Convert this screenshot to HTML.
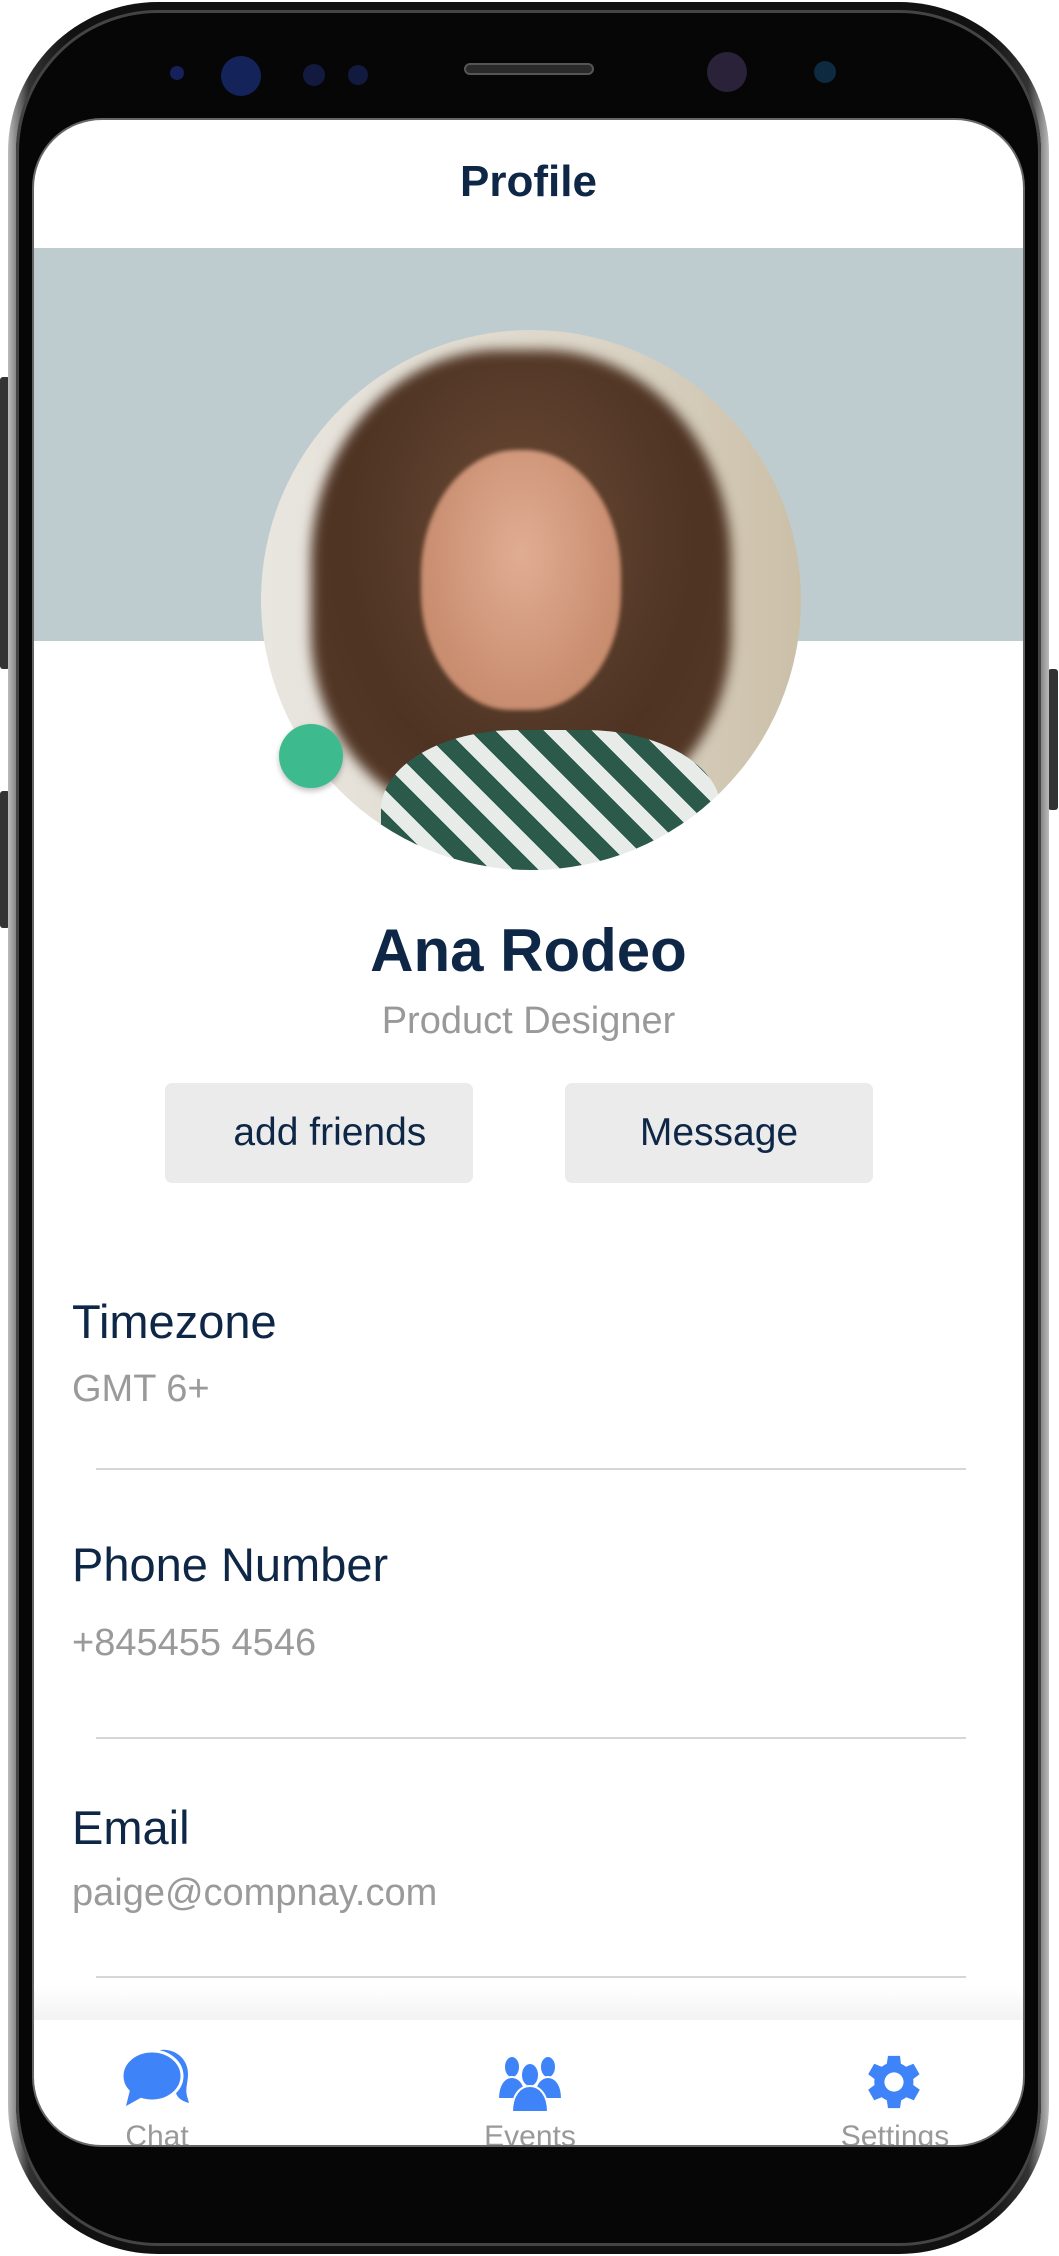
<!DOCTYPE html>
<html><head><meta charset="utf-8"><style>
*{margin:0;padding:0;box-sizing:border-box}
body{width:1059px;height:2256px;background:#fff;position:relative;overflow:hidden;font-family:"Liberation Sans","DejaVu Sans",sans-serif}
.abs{position:absolute}
.outer{left:8px;top:2px;width:1041px;height:2252px;border-radius:150px;background:linear-gradient(90deg,#bbb,#333 2%,#111 6%,#111 94%,#333 98%,#bbb);}
.body{left:16px;top:10px;width:1025px;height:2236px;border-radius:142px;background:#060606;box-shadow:inset 0 0 0 3px #444}
.screen{left:32px;top:118px;width:993px;height:2029px;border-radius:70px;background:#fff;overflow:hidden;border:2px solid #666}
.lbl{position:absolute;left:38px;color:#0f2747;font-size:47px}
.val{position:absolute;left:38px;color:#9a9a9a;font-size:38px}
.hr{position:absolute;left:62px;width:870px;height:2px;background:#d6d6d6}
.btn{position:absolute;top:963px;width:308px;height:100px;background:#ebebeb;border-radius:7px;color:#0f2747;font-size:39px;line-height:100px;text-align:center}
.nl{position:absolute;top:2000px;color:#999;font-size:30px;width:200px;text-align:center}
</style></head><body>
<div class="abs" style="left:0;top:377px;width:10px;height:292px;background:#333;border-radius:3px"></div>
<div class="abs" style="left:0;top:791px;width:10px;height:137px;background:#333;border-radius:3px"></div>
<div class="abs" style="left:1048px;top:669px;width:10px;height:141px;background:#333;border-radius:3px"></div>
<div class="abs outer"></div>
<div class="abs body"></div>
<div class="abs" style="left:170px;top:66px;width:14px;height:14px;border-radius:50%;background:#16205a"></div>
<div class="abs" style="left:221px;top:56px;width:40px;height:40px;border-radius:50%;background:#14235a"></div>
<div class="abs" style="left:303px;top:64px;width:22px;height:22px;border-radius:50%;background:#131a40"></div>
<div class="abs" style="left:348px;top:65px;width:20px;height:20px;border-radius:50%;background:#131a40"></div>
<div class="abs" style="left:464px;top:63px;width:130px;height:12px;border-radius:6px;background:#2a2a2a;border:2px solid #555"></div>
<div class="abs" style="left:707px;top:52px;width:40px;height:40px;border-radius:50%;background:#2a2238"></div>
<div class="abs" style="left:814px;top:61px;width:22px;height:22px;border-radius:50%;background:#0d2a40"></div>
<div class="abs screen">
  <div class="abs" style="left:0;top:0;width:100%;height:128px;text-align:center;line-height:124px;font-size:44px;font-weight:bold;color:#0f2747">Profile</div>
  <div class="abs" style="left:0;top:128px;width:100%;height:393px;background:#bfcccf"></div>
  <div class="abs" style="left:227px;top:210px;width:540px;height:540px;border-radius:50%;overflow:hidden;background:linear-gradient(90deg,#e9e6e0,#dcd6c8 60%,#cbbfa8)">
    <div class="abs" style="left:50px;top:20px;width:420px;height:470px;border-radius:45% 45% 40% 40%;background:radial-gradient(ellipse at 50% 40%,#6a4a35,#4e3323 60%,#5a3d2a);filter:blur(6px)"></div>
    <div class="abs" style="left:160px;top:120px;width:200px;height:260px;border-radius:48% 48% 45% 45%;background:radial-gradient(ellipse at 50% 40%,#e0ad92,#c98d70 70%);filter:blur(2px)"></div>
    <div class="abs" style="left:120px;top:400px;width:340px;height:200px;border-radius:40% 40% 0 0;background:repeating-linear-gradient(45deg,#2b5a4a 0 18px,#e8ece8 18px 34px)"></div>
  </div>
  <div class="abs" style="left:245px;top:604px;width:64px;height:64px;border-radius:50%;background:#3dbb8e;box-shadow:0 3px 6px rgba(0,0,0,.25)"></div>
  <div class="abs" style="left:0;top:796px;width:100%;text-align:center;font-size:60px;font-weight:bold;color:#0f2747">Ana Rodeo</div>
  <div class="abs" style="left:0;top:880px;width:100%;text-align:center;font-size:38px;color:#999">Product Designer</div>
  <div class="btn" style="left:131px">&nbsp;&nbsp;add friends</div>
  <div class="btn" style="left:531px">Message</div>
  <div class="lbl" style="top:1174px">Timezone</div>
  <div class="val" style="top:1248px">GMT 6+</div>
  <div class="hr" style="top:1348px"></div>
  <div class="lbl" style="top:1417px">Phone Number</div>
  <div class="val" style="top:1502px">+845455 4546</div>
  <div class="hr" style="top:1617px"></div>
  <div class="lbl" style="top:1680px">Email</div>
  <div class="val" style="top:1752px">paige@compnay.com</div>
  <div class="hr" style="top:1856px"></div>
  <div class="abs" style="left:0;top:1866px;width:100%;height:34px;background:linear-gradient(#fff,#f3f3f3)"></div>
  <svg class="abs" style="left:88px;top:1928px" width="70" height="58" viewBox="0 0 70 58"><path d="M38 2c14-2 28 8 28 24 0 9-3 14-1 22l2 7c-8-2-12-6-13-10-2-16-4-26-16-43z" fill="#3f83f8"/><ellipse cx="30" cy="28" rx="30" ry="25" fill="#3f83f8" stroke="#fff" stroke-width="3"/><path d="M8 42 4 58l18-10z" fill="#3f83f8"/></svg>
  <svg class="abs" style="left:462px;top:1935px" width="68" height="58" viewBox="0 0 68 58"><g fill="#3f83f8" stroke="#fff" stroke-width="2"><ellipse cx="16" cy="12" rx="8" ry="11"/><ellipse cx="52" cy="12" rx="8" ry="11"/><path d="M2 44c0-14 6-22 14-22s14 8 14 22z"/><path d="M38 44c0-14 6-22 14-22s14 8 14 22z"/><ellipse cx="34" cy="20" rx="9" ry="12"/><path d="M16 57c0-17 8-26 18-26s18 9 18 26z"/></g></svg>
  <svg class="abs" style="left:824px;top:1926px" width="72" height="72" viewBox="0 0 24 24"><path fill="#3f83f8" d="M19.4 13a7.5 7.5 0 0 0 0-2l2.1-1.6-2-3.5-2.5 1a7.6 7.6 0 0 0-1.7-1L15 3.3h-4l-.4 2.6a7.6 7.6 0 0 0-1.7 1l-2.5-1-2 3.5L6.5 11a7.5 7.5 0 0 0 0 2l-2.1 1.6 2 3.5 2.5-1a7.6 7.6 0 0 0 1.7 1l.4 2.6h4l.4-2.6a7.6 7.6 0 0 0 1.7-1l2.5 1 2-3.5zM13 15.2a3.2 3.2 0 1 1 0-6.4 3.2 3.2 0 0 1 0 6.4z" transform="translate(-1 0)"/></svg>
  <div class="nl" style="left:23px">Chat</div>
  <div class="nl" style="left:396px">Events</div>
  <div class="nl" style="left:761px">Settings</div>
</div>
</body></html>
